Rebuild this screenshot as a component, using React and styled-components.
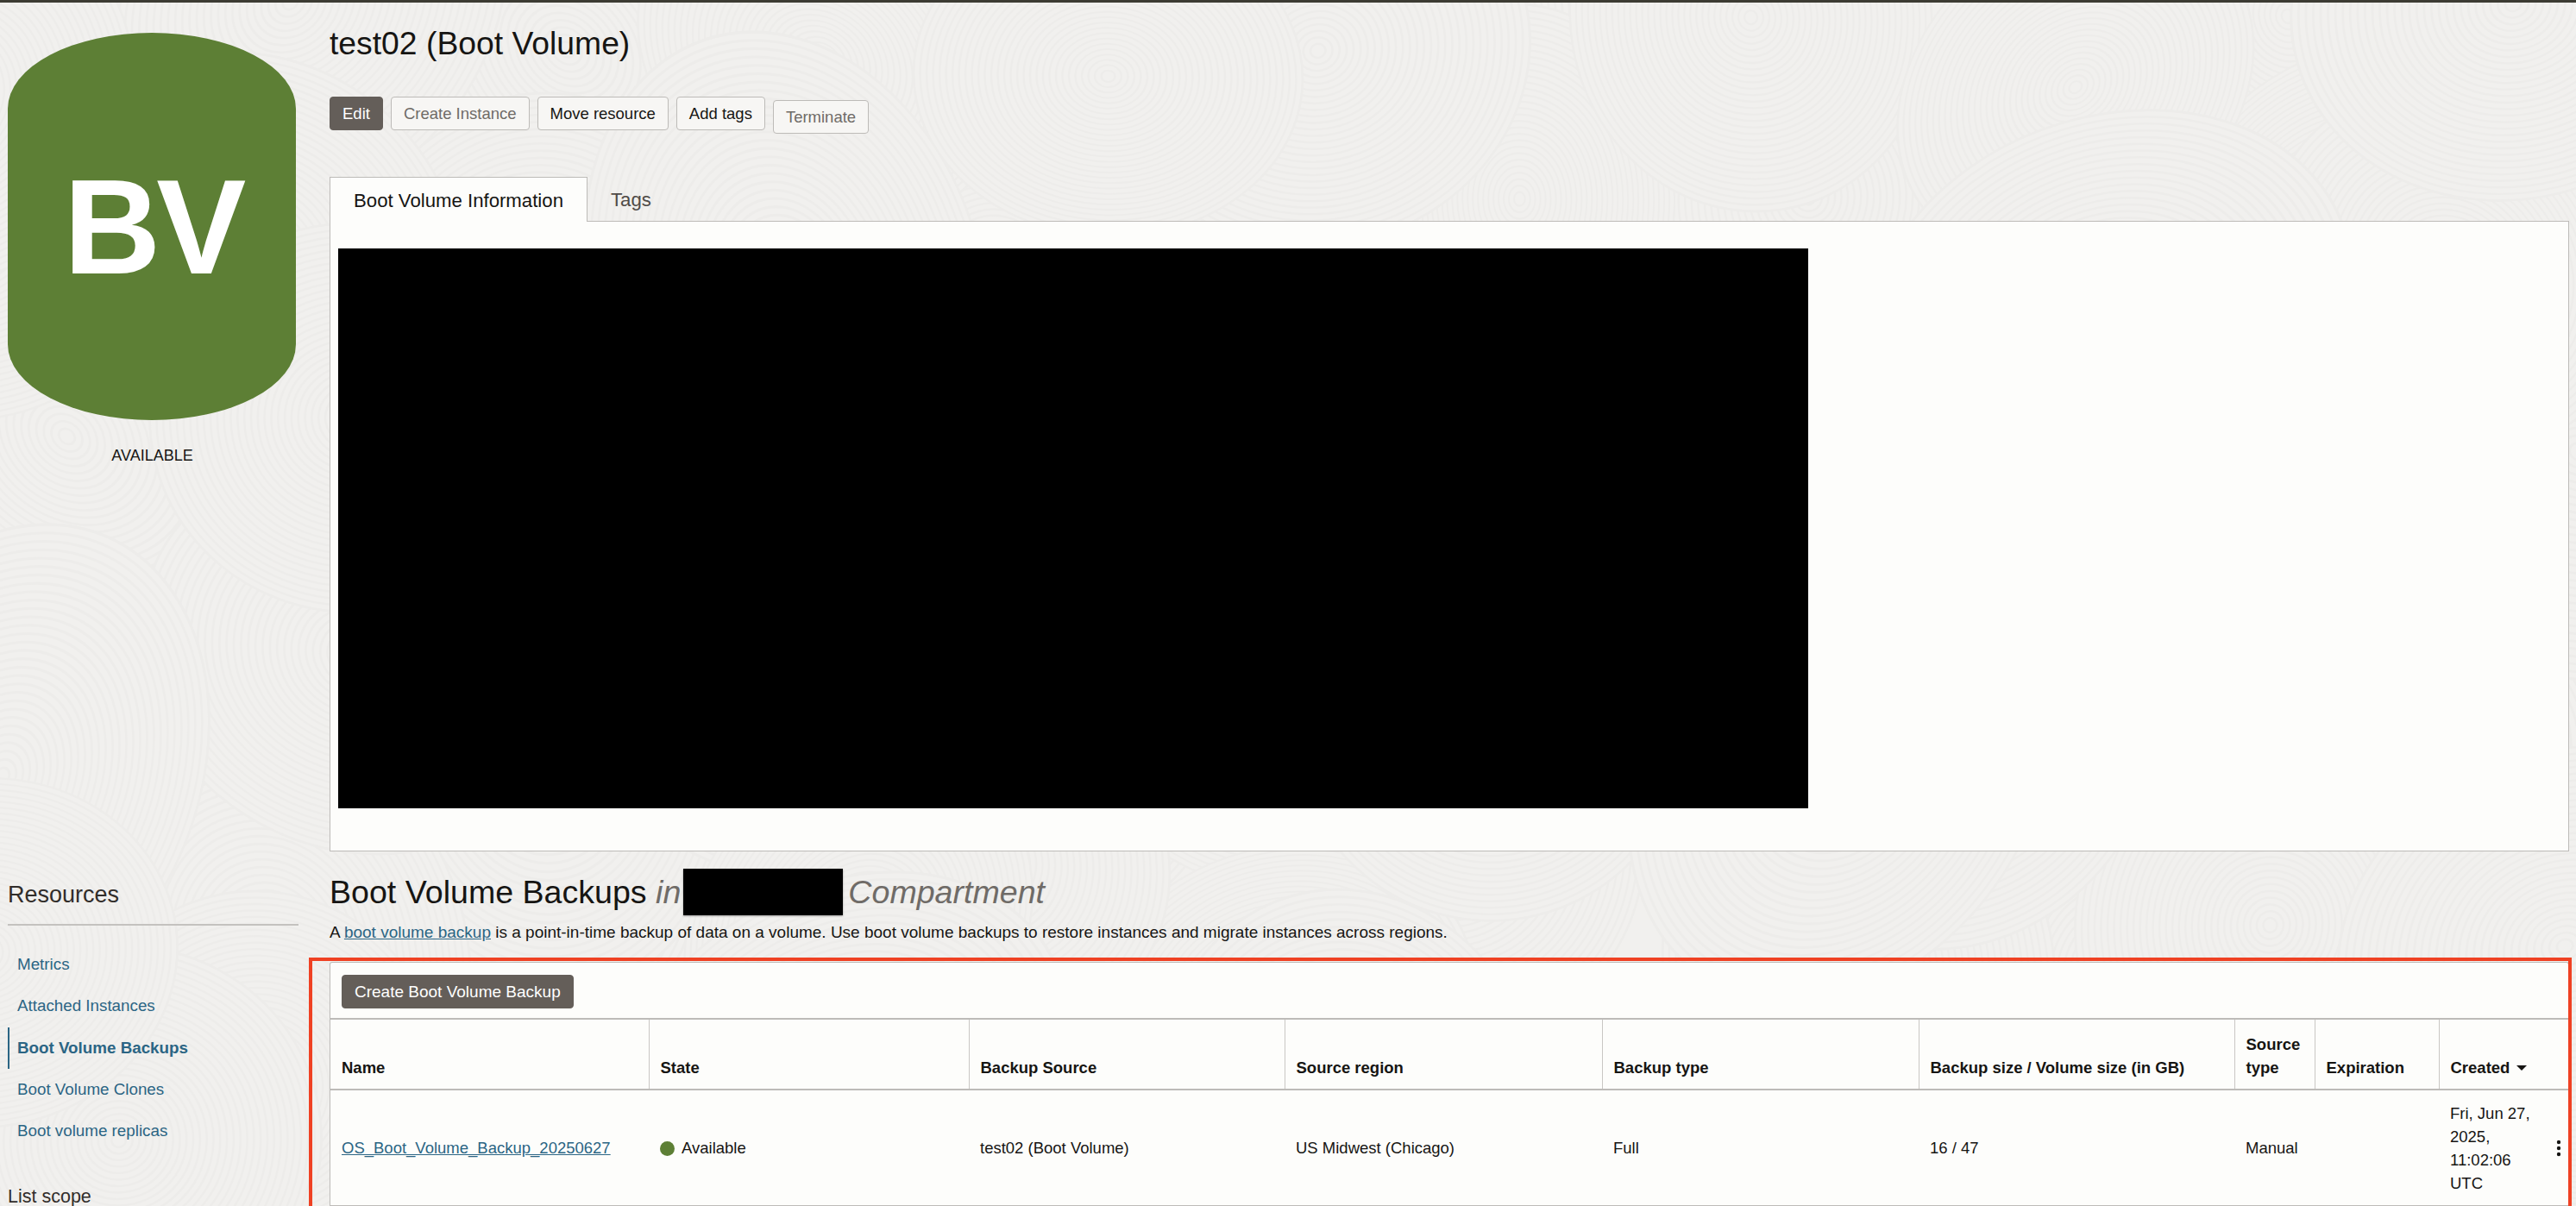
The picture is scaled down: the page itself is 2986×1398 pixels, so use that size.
import React from "react";
import styled, { createGlobalStyle } from "styled-components";

const GlobalStyle = createGlobalStyle`
  html, body {
    margin: 0;
    padding: 0;
    height: 100%;
    overflow: hidden;
  }
  body {
    font-family: "Liberation Sans", Arial, sans-serif;
    color: #161513;
  }
`;

const Page = styled.div`
  position: relative;
  display: grid;
  grid-template-columns: 382px 1fr;
  width: 2986px;
  height: 1398px;
  overflow: hidden;
  box-sizing: border-box;
  border-top: 3px solid #3c3b33;
  background-color: #f1f0ee;
`;

const Texture = styled.svg`
  position: absolute;
  left: 0;
  top: 0;
`;

const Sidebar = styled.aside`
  position: relative;
  display: flex;
  flex-direction: column;
  padding: 35px 36px 0 9px;
`;

const VolumeBadge = styled.div`
  width: 334px;
  height: 449px;
  border-radius: 167px / 88px;
  background: #5d7f35;
  color: #fff;
  display: flex;
  align-items: center;
  justify-content: center;
  font-size: 156px;
  font-weight: 700;
  letter-spacing: -5px;
  line-height: 1;
  padding-left: 2px;
  box-sizing: border-box;
`;

const VolumeState = styled.div`
  margin-top: 29px;
  text-align: center;
  font-size: 18px;
  line-height: 24px;
  padding-right: 2px;
`;

const SideTitle = styled.h3`
  margin: ${(p) => p.$top}px 0 0;
  font-size: ${(p) => p.$size}px;
  line-height: 32px;
  font-weight: 400;
  color: #312d2a;
`;

const ResourceList = styled.nav`
  margin-top: 18px;
  padding-top: 21px;
  border-top: 2px solid #c4c2bf;
  display: flex;
  flex-direction: column;
`;

const ResourceLink = styled.a`
  height: 48.25px;
  display: flex;
  align-items: center;
  padding-left: 9px;
  font-size: 18.8px;
  color: #2b6584;
  font-weight: ${(p) => (p.$active ? 700 : 400)};
  border-left: 2px solid ${(p) => (p.$active ? "#2b6584" : "transparent")};
`;

const Main = styled.main`
  position: relative;
  display: flex;
  flex-direction: column;
  padding-right: 8px;
  min-width: 0;
`;

const Title = styled.h1`
  margin: 25px 0 0;
  font-size: 37.3px;
  line-height: 44px;
  font-weight: 400;
`;

const Actions = styled.div`
  display: flex;
  align-items: flex-start;
  gap: 9px;
  margin-top: 40px;
  height: 93px;
`;

const Button = styled.button`
  height: 39px;
  margin-top: ${(p) => (p.$low ? "4px" : "0")};
  padding: 0 14px;
  box-sizing: border-box;
  border-radius: 4px;
  font-family: inherit;
  font-size: ${(p) => (p.$large ? "19px" : "18.5px")};
  white-space: nowrap;
  border: 1px solid ${(p) => (p.$primary ? "#645e59" : "#bdbbb8")};
  background: ${(p) => (p.$primary ? "#645e59" : "#f7f6f4")};
  color: ${(p) => (p.$primary ? "#fff" : p.$muted ? "#6f6b67" : "#161513")};
`;

const Tabs = styled.div`
  display: flex;
  height: 52px;
  position: relative;
  z-index: 1;
  margin-bottom: -1px;
`;

const Tab = styled.div`
  display: flex;
  align-items: center;
  box-sizing: border-box;
  height: 52px;
  padding: 2px 27px 0 27px;
  font-size: 22.2px;
  ${(p) =>
    p.$active
      ? `
    background: #fdfdfb;
    border: 1px solid #bdbbb8;
    border-bottom: 0;
    color: #161513;
  `
      : `
    color: #4f4b47;
  `}
`;

const InfoPanel = styled.section`
  height: 731px;
  box-sizing: border-box;
  background: #fdfdfb;
  border: 1px solid #bdbbb8;
  padding: 31px 0 0 9px;
`;

const Redacted = styled.div`
  width: 1704px;
  height: 649px;
  background: #000;
`;

const SectionTitle = styled.h2`
  margin: 20px 0 0;
  height: 54px;
  display: flex;
  align-items: center;
  font-size: 37.6px;
  font-weight: 400;
  white-space: pre;
`;

const Scope = styled.em`
  color: #6f6b67;
`;

const RedactedName = styled.span`
  display: block;
  width: 185px;
  height: 54px;
  margin: 0 6px 0 3px;
  background: #000;
  box-shadow: 0 1px 2px rgba(0, 0, 0, 0.35);
`;

const Intro = styled.p`
  margin: 9px 0 0;
  font-size: 19px;
  line-height: 22px;
`;

const Link = styled.a`
  color: #2b6584;
  text-decoration: underline;
`;

const TableArea = styled.section`
  position: relative;
  margin-top: 23px;
  background: #fdfdfb;
  border: 1px solid #bdbbb8;
  border-bottom: 0;
  border-radius: 3px 3px 0 0;
`;

const Highlight = styled.div`
  position: absolute;
  left: -25px;
  right: -4px;
  top: -6px;
  bottom: -60px;
  border: 4px solid #ef4123;
  pointer-events: none;
`;

const Toolbar = styled.div`
  height: 66px;
  box-sizing: border-box;
  padding: 14px 0 0 13px;
  border-bottom: 2px solid #bdbbb8;
`;

const DataTable = styled.table`
  width: 100%;
  table-layout: fixed;
  border-collapse: collapse;
  font-size: 18.5px;
`;

const HeadCell = styled.th`
  height: 81px;
  box-sizing: border-box;
  padding: 0 13px 11px;
  vertical-align: bottom;
  text-align: left;
  line-height: 27px;
  font-weight: 700;
  border-bottom: 2px solid #bdbbb8;
  border-left: ${(p) => (p.$first ? "0" : "1px solid #c9c7c4")};
`;

const Cell = styled.td`
  position: relative;
  height: 135px;
  box-sizing: border-box;
  padding: 0 ${(p) => (p.$menu ? "28px" : "13px")} 0 13px;
  line-height: 27px;
  border-bottom: 2px solid #bdbbb8;
`;

const StateDot = styled.span`
  display: inline-block;
  width: 17px;
  height: 17px;
  border-radius: 50%;
  background: #5d7f35;
  margin-right: 8px;
  vertical-align: -3px;
`;

const SortArrow = styled.span`
  display: inline-block;
  margin-left: 8px;
  vertical-align: 3px;
  border-left: 6px solid transparent;
  border-right: 6px solid transparent;
  border-top: 6px solid #161513;
`;

const RowMenu = styled.svg`
  position: absolute;
  right: 8px;
  top: 50%;
  margin-top: -10px;
`;

const COLUMNS = [369, 371, 366, 368, 367, 366, 93, 144];

const HEADERS = [
  "Name",
  "State",
  "Backup Source",
  "Source region",
  "Backup type",
  "Backup size / Volume size (in GB)",
  "Source type",
  "Expiration",
];

const RESOURCES = [
  "Metrics",
  "Attached Instances",
  "Boot Volume Backups",
  "Boot Volume Clones",
  "Boot volume replicas",
];

// fingerprint-like swirls of the page background, seeded so every run is the same
const buildSwirls = () => {
  let seed = 7;
  const rand = () => {
    seed = (seed * 16807) % 2147483647;
    return seed / 2147483647;
  };
  const swirls = [];
  for (let row = 0; row < 6; row++) {
    for (let col = 0; col < 11; col++) {
      swirls.push({
        id: `${row}-${col}`,
        x: col * 290 + rand() * 200 - 60,
        y: row * 260 + rand() * 180 - 60,
        stretch: 0.75 + rand() * 0.6,
        angle: rand() * 180,
        order: rand(),
      });
    }
  }
  return swirls.sort((a, b) => a.order - b.order);
};

const SWIRLS = buildSwirls();
const RINGS = Array.from({ length: 30 }, (_, i) => 8 + i * 7.5);

const Swirl = ({ x, y, stretch, angle }) => (
  <g transform={`translate(${x} ${y}) rotate(${angle}) scale(${stretch} 1)`}>
    <circle r={RINGS[RINGS.length - 1]} fill="#f1f0ee" />
    {RINGS.map((r) => (
      <circle key={r} r={r} />
    ))}
  </g>
);

export default function App() {
  return (
    <Page>
      <GlobalStyle />
      <Texture width="2986" height="1398" fill="none" stroke="#edecea" strokeWidth="2.4">
        {SWIRLS.map((s) => (
          <Swirl key={s.id} {...s} />
        ))}
      </Texture>
      <Sidebar>
        <VolumeBadge>BV</VolumeBadge>
        <VolumeState>AVAILABLE</VolumeState>
        <SideTitle $top={481} $size={27}>
          Resources
        </SideTitle>
        <ResourceList>
          {RESOURCES.map((name) => (
            <ResourceLink key={name} $active={name === "Boot Volume Backups"}>
              {name}
            </ResourceLink>
          ))}
        </ResourceList>
        <SideTitle $top={36} $size={21.5}>
          List scope
        </SideTitle>
      </Sidebar>
      <Main>
        <Title>test02 (Boot Volume)</Title>
        <Actions>
          <Button $primary>Edit</Button>
          <Button $muted>Create Instance</Button>
          <Button>Move resource</Button>
          <Button>Add tags</Button>
          <Button $muted $low>
            Terminate
          </Button>
        </Actions>
        <Tabs>
          <Tab $active>Boot Volume Information</Tab>
          <Tab>Tags</Tab>
        </Tabs>
        <InfoPanel>
          <Redacted />
        </InfoPanel>
        <SectionTitle>
          Boot Volume Backups <Scope>in</Scope>
          <RedactedName />
          <Scope>Compartment</Scope>
        </SectionTitle>
        <Intro>
          A <Link>boot volume backup</Link> is a point-in-time backup of data on a volume. Use boot
          volume backups to restore instances and migrate instances across regions.
        </Intro>
        <TableArea>
          <Highlight />
          <Toolbar>
            <Button $primary $large>
              Create Boot Volume Backup
            </Button>
          </Toolbar>
          <DataTable>
            <colgroup>
              {COLUMNS.map((w, i) => (
                <col key={i} width={w} />
              ))}
              <col />
            </colgroup>
            <thead>
              <tr>
                {HEADERS.map((h, i) => (
                  <HeadCell key={h} $first={i === 0}>
                    {h}
                  </HeadCell>
                ))}
                <HeadCell>
                  Created
                  <SortArrow />
                </HeadCell>
              </tr>
            </thead>
            <tbody>
              <tr>
                <Cell>
                  <Link>OS_Boot_Volume_Backup_20250627</Link>
                </Cell>
                <Cell>
                  <StateDot />
                  Available
                </Cell>
                <Cell>test02 (Boot Volume)</Cell>
                <Cell>US Midwest (Chicago)</Cell>
                <Cell>Full</Cell>
                <Cell>16 / 47</Cell>
                <Cell>Manual</Cell>
                <Cell />
                <Cell $menu>
                  Fri, Jun 27, 2025, 11:02:06 UTC
                  <RowMenu width="6" height="20" viewBox="0 0 6 20" fill="#161513">
                    <circle cx="3" cy="3" r="2.2" />
                    <circle cx="3" cy="10" r="2.2" />
                    <circle cx="3" cy="17" r="2.2" />
                  </RowMenu>
                </Cell>
              </tr>
            </tbody>
          </DataTable>
        </TableArea>
      </Main>
    </Page>
  );
}
